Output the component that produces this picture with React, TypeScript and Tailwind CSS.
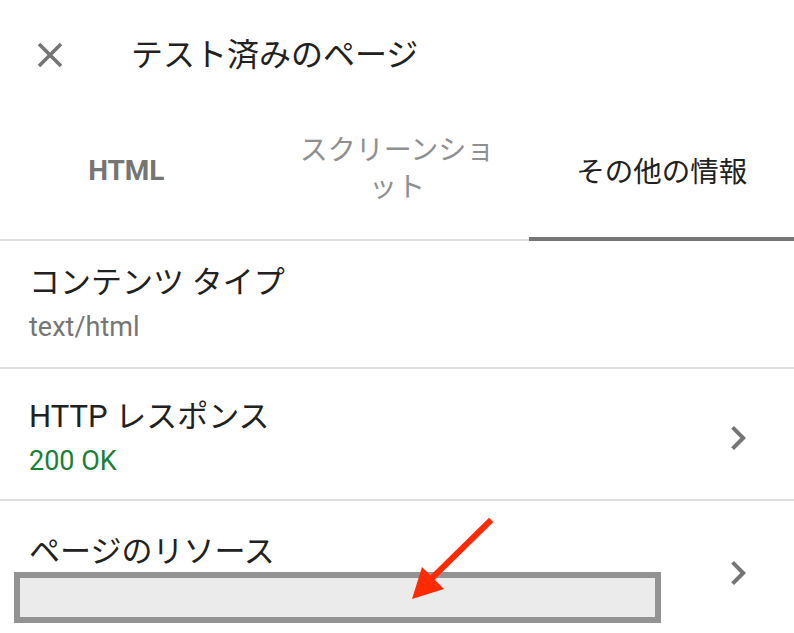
import React from 'react';

const font = { fontFamily: 'Roboto, "Noto Sans CJK JP", sans-serif' };

const Chevron: React.FC = () => (
  <svg width="48" height="48" viewBox="0 0 24 24" className="shrink-0" aria-hidden>
    <path d="M10 6L8.59 7.41 13.17 12l-4.58 4.59L10 18l6-6z" fill="#757575" />
  </svg>
);

type RowProps = {
  title: string;
  sub?: React.ReactNode;
  chevron?: boolean;
  pad: string;
};

const Row: React.FC<RowProps> = ({ title, sub, chevron, pad }) => (
  <div className={`flex items-center border-b-2 border-[#e0e0e0] pl-[29px] pr-[32px] ${pad}`}>
    <div className="flex min-w-0 flex-1 flex-col">
      <p className="text-[31px] leading-[40px] text-[#212121]">{title}</p>
      <p className="mt-[6px] h-[36px] text-[27px] leading-[36px] text-[#757575]">{sub}</p>
    </div>
    {chevron && <Chevron />}
  </div>
);

export default function App() {
  return (
    <div className="relative h-[633px] w-[794px] overflow-hidden bg-white" style={font}>
      {/* header */}
      <div className="flex h-[110px] items-center">
        <button type="button" className="ml-[37px] flex h-[26px] w-[26px] items-center justify-center">
          <svg width="26" height="26" viewBox="0 0 26 26" aria-hidden>
            <path d="M2 2L24 24M24 2L2 24" stroke="#757575" strokeWidth="3.6" />
          </svg>
        </button>
        <h1 className="ml-[68px] text-[32px] leading-[40px] text-[#212121]">テスト済みのページ</h1>
      </div>

      {/* tabs */}
      <div className="grid h-[131px] grid-cols-3 border-b-2 border-[#e0e0e0]">
        <div className="flex items-center justify-center border-b-4 border-transparent pb-[5px] pr-[12px]">
          <span className="text-[28px] font-bold leading-[37px] text-[#757575]">HTML</span>
        </div>
        <div className="flex items-center justify-center border-b-4 border-transparent px-6 pb-[7px]">
          <span className="text-center text-[28px] leading-[37px] text-[#909090]">
            スクリーンショ
            <br />
            ット
          </span>
        </div>
        <div className="-mb-[2px] flex items-center justify-center border-b-4 border-[#757575] pb-[3px]">
          <span className="text-[28.5px] leading-[37px] text-[#212121]">その他の情報</span>
        </div>
      </div>

      {/* list */}
      <Row title="コンテンツ タイプ" sub="text/html" pad="py-[22px]" />
      <Row
        title="HTTP レスポンス"
        sub={<span className="text-[#188038]">200 OK</span>}
        chevron
        pad="pt-[28px] pb-[20px]"
      />
      <Row title="ページのリソース" chevron pad="pt-[31px] pb-[20px]" />

      {/* redaction box */}
      <div className="absolute left-[14px] top-[572px] h-[51px] w-[647px] border-[6px] border-[#939393] bg-[#ebebeb]" />

      {/* annotation arrow */}
      <svg className="pointer-events-none absolute left-[400px] top-[510px]" width="100" height="100" viewBox="0 0 100 100" aria-hidden>
        <path d="M89 12L32 68" stroke="#ff2a00" strokeWidth="6" strokeLinecap="square" />
        <polygon points="12,89 22,57 44,79" fill="#ff2a00" />
      </svg>
    </div>
  );
}
